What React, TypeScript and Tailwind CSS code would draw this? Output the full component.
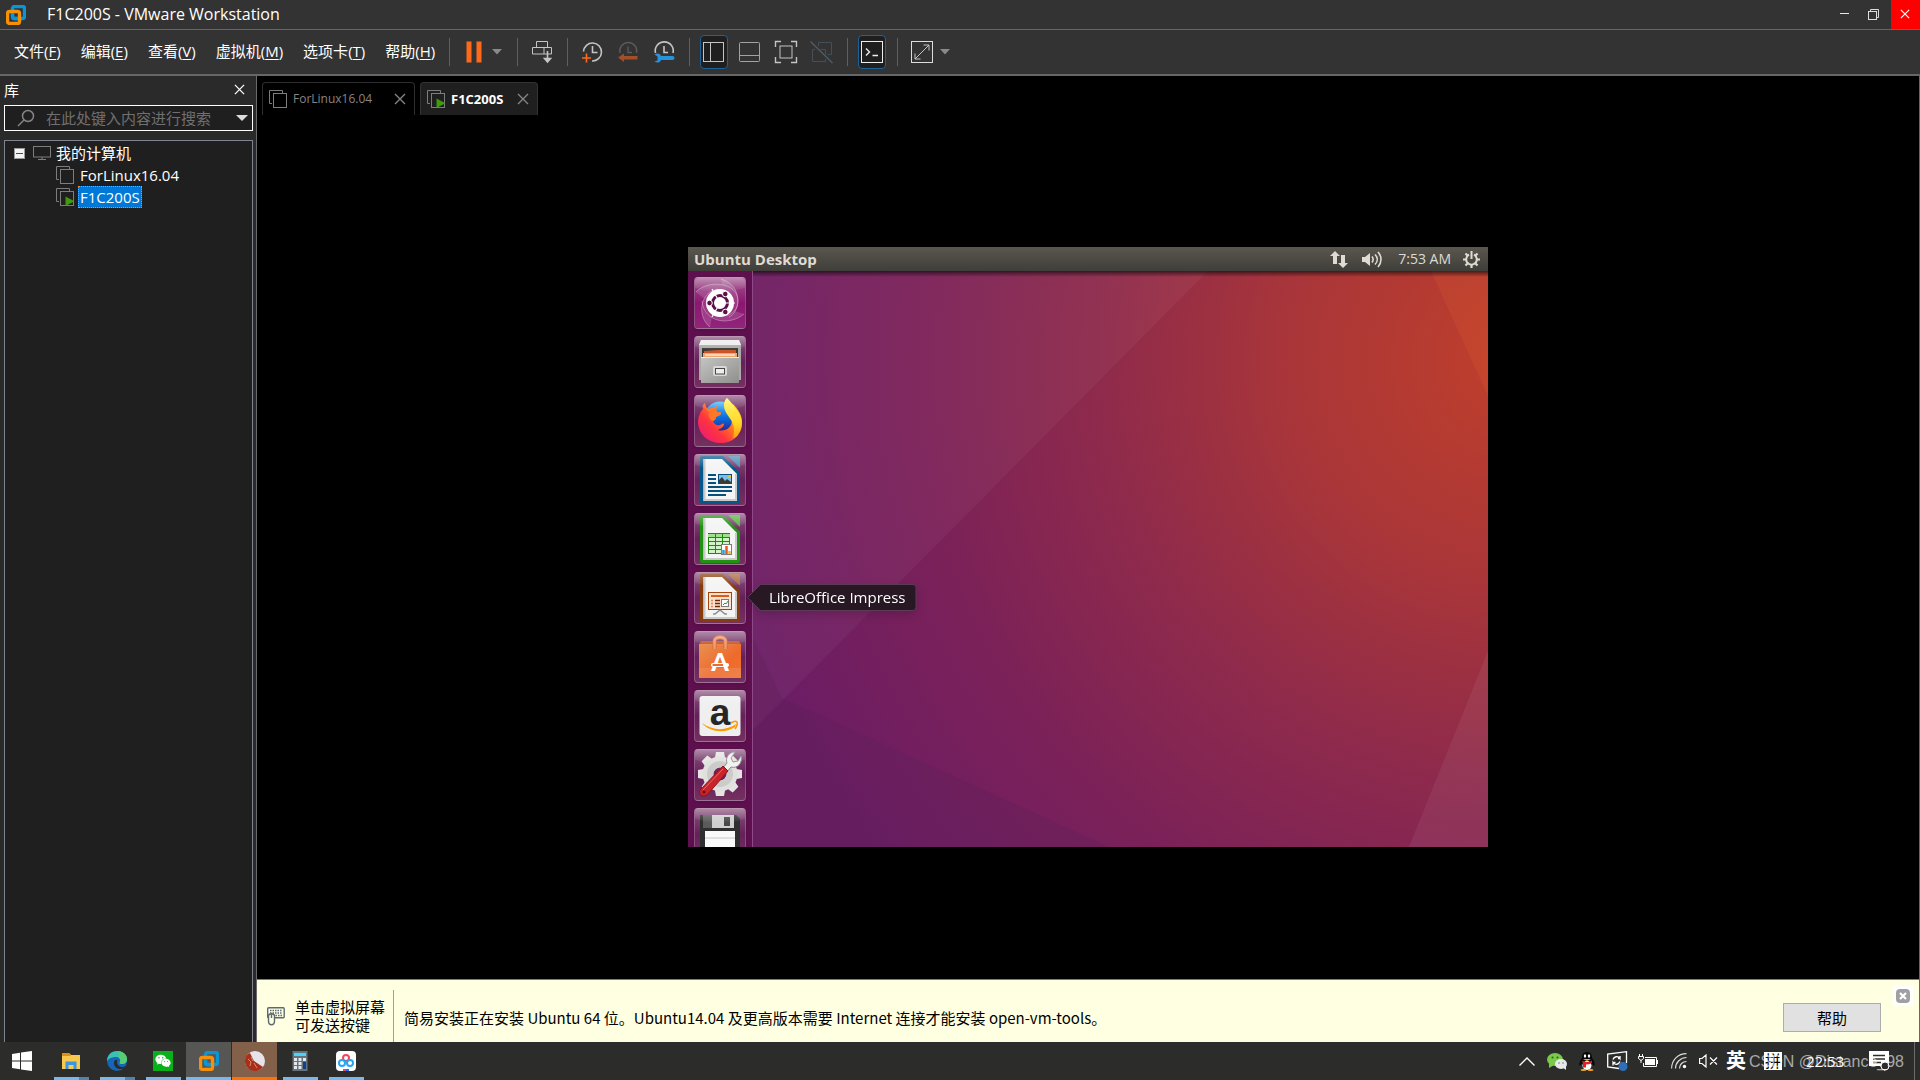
import React from 'react';
import { FaWeixin } from 'react-icons/fa';

const menus = [
  { label: '文件', key: 'F' },
  { label: '编辑', key: 'E' },
  { label: '查看', key: 'V' },
  { label: '虚拟机', key: 'M' },
  { label: '选项卡', key: 'T' },
  { label: '帮助', key: 'H' }
];

const VmwareLogo: React.FC = () => (
  <svg viewBox="0 0 20 20" className="w-5 h-5" fill="none" strokeWidth="3.400">
    <rect x="6.5" y="1.5" width="12" height="12" rx="2" stroke="#0c95d5" />
    <rect x="1.5" y="6.5" width="12" height="12" rx="2" stroke="#f69009" />
    <path d="M6.5 8.500v3a2 2 0 0 0 2 2H11" stroke="#0c95d5" />
  </svg>
);

const VmIcon: React.FC<{ running?: boolean }> = ({ running }) => (
  <svg viewBox="0 0 18 18" className="w-[18px] h-[18px] shrink-0" fill="none" stroke="#7d7d7d">
    <path d="M3 13.5H.5V.5h13V3" />
    <rect x="4.5" y="3.5" width="13" height="14" />
    {running && <path d="M9.500 8.500v9.500l9-4.700z" fill="#3f9a0c" stroke="none" />}
  </svg>
);

const CloseGlyph: React.FC<{ className: string }> = ({ className }) => (
  <svg viewBox="0 0 12 12" className={className} fill="none" stroke="currentColor" strokeWidth="1.4">
    <path d="M1 1l10 10M11 1L1 11" />
  </svg>
);

const Separator: React.FC = () => <div className="w-px h-7 ml-[11px] mr-2.5 shrink-0 bg-[#5f5f5f]"></div>;

const Caret: React.FC = () => (
  <button aria-label="More" className="w-[18px] h-[34px] flex items-center justify-center">
    <svg viewBox="0 0 10 6" className="w-2.5 h-1.5">
      <path d="M0 0h10L5 5.500z" fill="#8a8a8a" />
    </svg>
  </button>
);

interface ToolProps {
  label: string;
  active?: boolean;
  children: React.ReactNode;
}

const Tool: React.FC<ToolProps> = ({ label, active, children }) => (
  <button
    aria-label={label}
    className={
      active
        ? 'w-7 h-[34px] flex items-center justify-center rounded-sm border border-[#1d6299] bg-[#1f1f1f]'
        : 'w-7 h-[34px] flex items-center justify-center'
    }
  >
    <svg viewBox="0 0 24 24" className="w-6 h-6 shrink-0" fill="none" stroke="#c4c4c4">
      {children}
    </svg>
  </button>
);

const TitleBar: React.FC = () => (
  <header className="h-[30px] flex items-center bg-[#333333] border-b border-[#666666]">
    <div className="pl-1.5 w-[47px]">
      <VmwareLogo />
    </div>
    <h1 className="flex-1 pb-0.5 text-[16px] leading-5">F1C200S - VMware Workstation</h1>
    <button aria-label="Minimize" className="w-[29px] h-[29px] pb-0.5 flex items-center justify-center">
      <span className="w-[9px] h-px bg-gray-200"></span>
    </button>
    <button aria-label="Restore" className="w-[29px] h-[29px] mr-[3px] flex items-center justify-center">
      <svg viewBox="0 0 11 11" className="w-[11px] h-[11px]" fill="none" stroke="#dddddd">
        <path d="M2.500 2.500v-2h8v8h-2" />
        <rect x=".5" y="2.500" width="8" height="8" />
      </svg>
    </button>
    <button aria-label="Close" className="w-[29px] h-[29px] pr-0.5 pb-0.5 flex items-center justify-center bg-[#ff0000]">
      <CloseGlyph className="w-2.5 h-2.5" />
    </button>
  </header>
);

const ToolBar: React.FC = () => (
  <nav className="h-[46px] flex items-center bg-[#333333] border-b-2 border-[#666666]">
    <div className="flex gap-5 pl-3.5 pb-[3px] w-[438px] shrink-0 text-[15px] leading-5 whitespace-nowrap">
      {menus.map((menu) => (
        <button key={menu.key}>
          {menu.label}(<span className="underline underline-offset-2">{menu.key}</span>)
        </button>
      ))}
    </div>
    <Separator />
    <Tool label="Pause">
      <path d="M4.500 1.500h5v21h-5zM14.500 1.500h5v21h-5z" fill="#ff6a1a" stroke="none" />
    </Tool>
    <Caret />
    <Separator />
    <Tool label="Send Ctrl+Alt+Del">
      <path d="M6.500 7.500v-6h11v6M2.500 7.500h19v6.500h-19zM14 7.500V14" />
      <path d="M17.500 11v11M14.500 18.500l3 3.500 3-3.500z" fill="#c4c4c4" strokeWidth="1.600" />
    </Tool>
    <Separator />
    <div className="flex gap-2">
      <Tool label="Take snapshot">
        <path d="M3.500 11.500A9 9 0 1 1 12 21" strokeWidth="1.600" />
        <path d="M12.500 6v6.500h5" strokeWidth="1.600" />
        <path d="M6.500 13.500v9M2 18h9" stroke="#ff6a1a" strokeWidth="1.600" />
      </Tool>
      <Tool label="Revert snapshot">
        <path d="M4 13a8.500 8.500 0 1 1 16.500 0M12 6.500v6h4" stroke="#5a5a5a" strokeWidth="1.400" />
        <path d="M2 17.500l6-4v2.500h13.500v3.500H8V22z" fill="#a24e28" stroke="none" />
      </Tool>
      <Tool label="Manage snapshots">
        <path d="M3.500 13a9 9 0 1 1 17.500 0M12 6v6.500h4" strokeWidth="1.600" />
        <path
          d="M2.500 14.500c3-2 6-1 6.500 1.500h11.500a1.800 1.800 0 0 1 0 4H9c-.5 2.500-3.500 3.500-6.500 1.500l3-1v-4z"
          fill="#2793dc"
          stroke="none"
        />
      </Tool>
    </div>
    <Separator />
    <div className="flex gap-2">
      <Tool label="Library" active>
        <rect x="1.500" y="2.500" width="20" height="19" />
        <path d="M8.500 2.500v19" />
      </Tool>
      <Tool label="Thumbnail bar">
        <rect x="1.500" y="2.500" width="20" height="19" rx="1" stroke="#a2a2a2" />
        <path d="M1.500 15.500h20" stroke="#a2a2a2" />
      </Tool>
      <Tool label="Full screen">
        <path d="M1.500 7V1.500H7M17 1.500h5.500V7M22.500 17v5.500H17M7 22.500H1.500V17" strokeWidth="1.400" />
        <rect x="6" y="6" width="12" height="12" />
      </Tool>
      <Tool label="Unity">
        <path d="M8.500 6V2.500h13v12h-4M5 9.500H2.500v12h13V19M10.500 9.500h5v5" stroke="#435059" />
        <path d="M.5 1.500l22 21.500" stroke="#4e5c66" strokeWidth="1.400" />
      </Tool>
    </div>
    <Separator />
    <Tool label="Console" active>
      <rect x="1.500" y="1.500" width="21" height="21" stroke="#eeeeee" />
      <path d="M6 8.500l3.500 3.500L6 15.500M12.500 15.500H18" stroke="#eeeeee" strokeWidth="1.400" />
    </Tool>
    <Separator />
    <Tool label="Stretch">
      <rect x="1.500" y="1.500" width="21" height="21" stroke="#dddddd" />
      <path d="M5 19L19 5M13.500 5H19v5.500M5 13.500V19h5.500" />
    </Tool>
    <Caret />
  </nav>
);

const Library: React.FC = () => (
  <aside className="w-[257px] shrink-0 flex flex-col px-1 bg-[#2a2a2a] border-r border-[#6a6a6a]">
    <div className="h-[29px] flex items-center justify-between pr-[7px] pb-0.5 text-[15px] leading-5">
      <h2>库</h2>
      <button aria-label="Close library">
        <CloseGlyph className="w-[11px] h-[11px]" />
      </button>
    </div>
    <div className="h-[26px] w-[249px] flex items-center pl-3 pr-1 border border-white bg-[#1f1f1f]">
      <svg viewBox="0 0 18 18" className="w-[18px] h-[18px] shrink-0" fill="none" stroke="#858585" strokeWidth="1.500">
        <circle cx="11" cy="7" r="5.500" />
        <path d="M7 11l-6 6" />
      </svg>
      <input
        aria-label="搜索"
        placeholder="在此处键入内容进行搜索"
        className="w-[178px] ml-[11px] shrink-0 bg-transparent outline-none text-[15px] leading-5 placeholder:text-[#707070]"
      />
      <svg viewBox="0 0 12 6" className="w-3 h-1.5 ml-auto shrink-0">
        <path d="M0 0h12L6 6z" fill="#dddddd" />
      </svg>
    </div>
    <div className="mt-[9px] w-[249px] flex-1 pt-px border border-b-0 border-[#7d8590] bg-[#1f1f1f] text-[15px] leading-5">
      <div className="h-[22px] flex items-center pl-[9px]">
        <button aria-label="Collapse" className="w-[11px] h-[11px] flex items-center justify-center bg-gray-100 border border-[#9a9a9a]">
          <span className="w-[7px] h-px bg-[#3546a0]"></span>
        </button>
        <svg viewBox="0 0 18 14" className="w-[18px] h-3.5 ml-2 mr-[5px]" fill="none" stroke="#7d7d7d">
          <rect x=".5" y=".5" width="17" height="10.500" />
          <path d="M9 11v2.500M5 13.500h8" />
        </svg>
        <span>我的计算机</span>
      </div>
      <div className="h-[22px] flex items-center pl-[51px]">
        <VmIcon />
        <span className="ml-1.5">ForLinux16.04</span>
      </div>
      <div className="h-[22px] flex items-center pl-[51px]">
        <VmIcon running />
        <span className="ml-1 px-px bg-[#0078d7] border border-dotted border-[#ff8728]">F1C200S</span>
      </div>
    </div>
  </aside>
);

const Tabs: React.FC = () => (
  <div className="flex gap-[5px] pl-[5px] pt-1.5 h-[39px] leading-4">
    <div className="w-[153px] flex items-center pl-1.5 pr-2 rounded-t border border-b-0 border-[#2e2e2e] text-[#858585] text-[12px]">
      <VmIcon />
      <span className="ml-1.5 flex-1">ForLinux16.04</span>
      <button aria-label="Close ForLinux16.04">
        <CloseGlyph className="w-3 h-3" />
      </button>
    </div>
    <div className="w-[118px] flex items-center pl-1.5 pr-2 rounded-t border border-b-0 border-[#333333] bg-[#1f1f1f] text-[#858585] text-[13px]">
      <VmIcon running />
      <span className="ml-1.5 flex-1 font-bold text-white">F1C200S</span>
      <button aria-label="Close F1C200S">
        <CloseGlyph className="w-3 h-3" />
      </button>
    </div>
  </div>
);

const DashIcon: React.FC = () => (
  <>
    <rect width="52" height="52" rx="3" fill="url(#dash)" />
    <path d="M2 15C14 2 44 5 44 24c0 9-6 13-12 15M16 50C3 40 5 15 24 12M50 37c-14 12-40 9-42-13M27 2c22 6 20 33 8 38" fill="#ffffff" fillOpacity=".14" stroke="#ffffff" strokeOpacity=".3" />
    <circle cx="26" cy="26" r="14" fill="#ffffff" />
    <circle cx="26" cy="26" r="7.500" fill="none" stroke="#5c1248" strokeWidth="3" />
    <path d="M26 26L18 12M26 26h15M26 26l-8 14" stroke="#ffffff" strokeWidth="1.200" />
    <circle cx="26" cy="26" r="5" fill="#ffffff" />
    <circle cx="15.500" cy="26" r="2.800" fill="#5c1248" stroke="#ffffff" />
    <circle cx="31.300" cy="17" r="2.800" fill="#5c1248" stroke="#ffffff" />
    <circle cx="31.300" cy="35" r="2.800" fill="#5c1248" stroke="#ffffff" />
  </>
);

const FilesIcon: React.FC = () => (
  <>
    <path d="M7 4h38l2 5v35H5V9z" fill="#a9a9a7" />
    <path d="M7 4h38l2 5H5z" fill="#ececec" />
    <path d="M8 12h36v10H8z" fill="#3a3735" />
    <path d="M10 15l14-1h18v8H10z" fill="#c7562b" />
    <path d="M9 17h34v5H9z" fill="#f0a66a" />
    <path d="M11 19h30" stroke="#ffffff" />
    <path d="M7 21h38v26H7z" fill="url(#steel)" />
    <path d="M7 21.500h38" stroke="#eeeeee" />
    <rect x="19" y="30" width="14" height="10" rx="2" fill="#d8d8d6" />
    <rect x="21.500" y="32.500" width="9" height="5.500" fill="#eeeeee" stroke="#484848" />
  </>
);

const FirefoxIcon: React.FC = () => (
  <>
    <circle cx="26" cy="22" r="15.500" fill="url(#globe)" />
    <path
      d="M11 8c0 3 1 5 3 6 3-1 7-1 9-3-1 3-1 5 0 6 2 0 4 0 4 1 0 2-3 3-5 4 0 2-1 3-3 4 1 3 4 5 7 4 2-1 4-2 4-1 0 3-4 5-6 6 7 2 14-2 14-10 0-6-7-11-8-16 0-2 1-4 3-6 2 4 4 6 6 6 5 5 10 12 9 20-1 12-10 19-21 19C14 48 5 40 4 28c0-6 2-11 5-14-1-3 0-5 2-6z"
      fill="url(#fox)"
    />
    <path d="M33 3c5 5 7 8 10 12 6 8 6 18 2 23-1 3-4 5-6 5 2-7 1-13-2-18-3-5-7-9-7-14 0-4 1-6 3-8z" fill="url(#flame)" />
    <path d="M11 8c0 3 1 5 3 6 3-1 7-1 9-3-1 3-1 5 0 6 2 0 4 0 4 1 0 2-3 3-5 4 0 2-1 3-3 4-3-1-5-5-4-9-2-2-5-4-4-9z" fill="#ff7626" />
  </>
);

interface DocProps {
  color: string;
  corner: string;
  children: React.ReactNode;
}

const DocIcon: React.FC<DocProps> = ({ color, corner, children }) => (
  <>
    <path d="M8 2h21l17 17v29a2 2 0 0 1-2 2H8a2 2 0 0 1-2-2V4a2 2 0 0 1 2-2z" fill={color} />
    <path d="M34 2h12v12z" fill={corner} />
    <path d="M9.500 5H28l15 15v27H9.500z" fill="#f4f4f4" />
    <path d="M10.500 5v41h31.500V20" fill="none" stroke="#c9c9c9" strokeWidth="2" />
    {children}
  </>
);

const WriterIcon: React.FC = () => (
  <DocIcon color="#06578a" corner="#4b8cb4">
    <path d="M14 21h8M14 25h8M14 29h8M14 33h24M14 37h24M14 41h18" stroke="#06507f" strokeWidth="2" />
    <rect x="24.500" y="20.500" width="13" height="9" fill="#7cc0ee" stroke="#06507f" />
    <path d="M25 29v-3l3-3 3 4 2-2 4 3v1z" fill="#3b3b36" />
    <circle cx="35.500" cy="22.500" r="1.500" fill="#e9c13c" />
  </DocIcon>
);

const CalcIcon: React.FC = () => (
  <DocIcon color="#209312" corner="#55b33c">
    <rect x="14.500" y="20.500" width="21" height="20" fill="#d2f3c8" stroke="#1b8a0d" />
    <path d="M14 22.500h22" stroke="#9fe08c" strokeWidth="3" />
    <path d="M14 24.500h22M14 28.500h22M14 32.500h22M14 36.500h22M21.500 20v21M28.500 20v21" stroke="#1b8a0d" />
    <rect x="27.500" y="31.500" width="10" height="10" fill="#ffffff" stroke="#7c7c7c" />
    <path d="M29.500 41v-4" stroke="#2a9ddb" strokeWidth="2.500" />
    <path d="M32.500 41v-8" stroke="#e2591b" strokeWidth="2.500" />
    <path d="M35.500 41v-3" stroke="#eeb820" strokeWidth="2.500" />
  </DocIcon>
);

const ImpressIcon: React.FC = () => (
  <DocIcon color="#873c0c" corner="#a9663a">
    <rect x="14.500" y="20.500" width="23" height="17" fill="#fbe1cf" stroke="#a5440b" />
    <path d="M17 24h18" stroke="#d85f1d" strokeWidth="2" />
    <path d="M17 28.500h2M17 31.500h2M17 34.500h2" stroke="#e88455" strokeWidth="1.500" />
    <path d="M21 28.500h5M21 31.500h5M21 34.500h5" stroke="#6f2b07" strokeWidth="1.500" />
    <rect x="27.500" y="27.500" width="7" height="7" fill="#ffffff" stroke="#7c7c7c" />
    <path d="M29 33l2-2 1 1 2-3" stroke="#25a12d" fill="none" />
    <path d="M26 38l-5 4h-2M26 38l5 4h2" stroke="#8c8c8c" strokeWidth="1.500" fill="none" />
  </DocIcon>
);

const SoftwareIcon: React.FC = () => (
  <>
    <path d="M7 10h38l2 4H5z" fill="#c9592f" />
    <path d="M5 13h42v34H5z" fill="url(#bag)" />
    <path d="M5 37h42v10H5z" fill="#ffffff" fillOpacity=".1" />
    <path d="M20.500 18v-8c0-5 11-5 11 0v8" fill="none" stroke="#d9693c" strokeWidth="4" />
    <path d="M20.500 18v-8c0-5 11-5 11 0v8" fill="none" stroke="#f19a6c" strokeWidth="2.400" />
    <text x="26" y="40" textAnchor="middle" fontFamily="Lato" fontWeight="900" fontSize="25" fill="#ffffff">A</text>
    <rect x="17" y="32" width="18" height="4" rx="2" fill="#ffffff" />
    <path d="M18.500 34H29" stroke="#ee6a2c" strokeWidth="1.800" />
  </>
);

const AmazonIcon: React.FC = () => (
  <>
    <rect x="5.500" y="6" width="41" height="40" rx="3" fill="#efefef" />
    <text x="26" y="35" textAnchor="middle" fontFamily="Liberation Sans" fontWeight="700" fontSize="37" fill="#262626">a</text>
    <path d="M8 33c11 8 24 8 34 1l-1 3c-10 7-26 5-33-4z" fill="#ff9900" />
    <path d="M37 33c3-2 5-2 6-1 1 2 0 4-2 7" fill="none" stroke="#ff9900" strokeWidth="1.600" />
  </>
);

const SettingsIcon: React.FC = () => (
  <>
    {[0, 45, 90, 135, 180, 225, 270, 315].map((angle) => (
      <path key={angle} d="M20.500 11l1.500-8h8l1.500 8z" fill="#e4e4e2" transform={`rotate(${angle} 26 25)`} />
    ))}
    <circle cx="26" cy="25" r="12" fill="none" stroke="#e0e0de" strokeWidth="11" />
    <circle cx="26" cy="25" r="10" fill="none" stroke="#cbcbc9" strokeWidth="6" />
    <path d="M28 20l5-6c-2-5 2-11 8-11l-4 6 2 4 5-1 3-5c2 7-4 13-10 11l-6 7z" fill="#f2f2f0" stroke="#8b8b8b" />
    <path d="M29 17l5 5-21 24c-4 3-9-1-7-5z" fill="#c8242b" stroke="#911218" />
    <path d="M29 20L9 41" stroke="#e7696b" />
    <circle cx="10" cy="43" r="1.500" fill="#6e0e13" />
  </>
);

const FloppyIcon: React.FC = () => (
  <>
    <path d="M6 7h36l4 4v41H6z" fill="#2f2f2f" />
    <path d="M9 7h9v13H9z" fill="#5b5b5b" />
    <rect x="18" y="7" width="22" height="13" fill="#cfcfcf" />
    <rect x="30" y="9" width="6" height="9" fill="#474747" />
    <path d="M11 23h30v29H11z" fill="#f9f9f9" />
    <path d="M11 30h30" stroke="#c8c8c0" />
  </>
);

const launcher = [
  { name: 'Dash', icon: <DashIcon /> },
  { name: 'Files', icon: <FilesIcon /> },
  { name: 'Firefox', icon: <FirefoxIcon /> },
  { name: 'LibreOffice Writer', icon: <WriterIcon /> },
  { name: 'LibreOffice Calc', icon: <CalcIcon /> },
  { name: 'LibreOffice Impress', icon: <ImpressIcon /> },
  { name: 'Ubuntu Software', icon: <SoftwareIcon /> },
  { name: 'Amazon', icon: <AmazonIcon /> },
  { name: 'System Settings', icon: <SettingsIcon /> },
  { name: 'Floppy Disk', icon: <FloppyIcon /> }
];

const Gradients: React.FC = () => (
  <svg className="absolute w-0 h-0" aria-hidden="true">
    <defs>
      <linearGradient id="dash" x1="0" y1="0" x2="0" y2="1">
        <stop offset="0" stopColor="#a0588f" />
        <stop offset=".5" stopColor="#8d1670" />
        <stop offset="1" stopColor="#92257c" />
      </linearGradient>
      <linearGradient id="steel" x1="0" y1="0" x2="1" y2="1">
        <stop offset="0" stopColor="#c4c4c2" />
        <stop offset="1" stopColor="#8f8f8d" />
      </linearGradient>
      <linearGradient id="globe" x1="0" y1="0" x2="0" y2="1">
        <stop offset="0" stopColor="#5cc0fb" />
        <stop offset=".5" stopColor="#0a71e0" />
        <stop offset="1" stopColor="#2b1b8c" />
      </linearGradient>
      <linearGradient id="fox" x1="0" y1="1" x2="1" y2="0">
        <stop offset="0" stopColor="#e5137e" />
        <stop offset=".35" stopColor="#ff3440" />
        <stop offset=".65" stopColor="#ff9a12" />
        <stop offset="1" stopColor="#ffd428" />
      </linearGradient>
      <linearGradient id="flame" x1="0" y1="0" x2="0" y2="1">
        <stop offset="0" stopColor="#fff56a" />
        <stop offset=".6" stopColor="#ffd928" />
        <stop offset="1" stopColor="#ff9c10" />
      </linearGradient>
      <linearGradient id="bag" x1="0" y1="0" x2="1" y2="1">
        <stop offset="0" stopColor="#e79152" />
        <stop offset=".6" stopColor="#ee6a2c" />
        <stop offset="1" stopColor="#ee7434" />
      </linearGradient>
      <linearGradient id="sheen" x1="0" y1="0" x2="0" y2="1">
        <stop offset="0" stopColor="#ffffff" stopOpacity=".35" />
        <stop offset="1" stopColor="#ffffff" stopOpacity="0" />
      </linearGradient>
    </defs>
  </svg>
);

const Wallpaper: React.FC = () => (
  <svg viewBox="0 0 735 576" className="w-full h-full" preserveAspectRatio="none">
    <defs>
      <radialGradient id="sky" gradientUnits="userSpaceOnUse" cx="760" cy="90" r="800">
        <stop offset="0" stopColor="#bf3f2b" />
        <stop offset=".25" stopColor="#ac3737" />
        <stop offset=".5" stopColor="#902b4a" />
        <stop offset=".75" stopColor="#7b2159" />
        <stop offset="1" stopColor="#6c1d64" />
      </radialGradient>
      <linearGradient id="shade" x1="0" y1="0" x2="0" y2="1">
        <stop offset="0" stopColor="#000000" stopOpacity=".6" />
        <stop offset="1" stopColor="#000000" stopOpacity="0" />
      </linearGradient>
    </defs>
    <rect width="735" height="576" fill="url(#sky)" />
    <path d="M0 0h455L0 459z" fill="#ffffff" fillOpacity=".04" />
    <path d="M0 368l29 59L0 459z" fill="#4a1c40" fillOpacity=".15" />
    <path d="M0 459l29-32 327 149H0z" fill="#4a2050" fillOpacity=".16" />
    <path d="M678 0h57v125z" fill="#ff7a30" fillOpacity=".12" />
    <path d="M735 380v196h-79z" fill="#ffffff" fillOpacity=".06" />
    <rect width="735" height="6" fill="url(#shade)" />
  </svg>
);

const UbuntuDesktop: React.FC = () => (
  <section className="w-[800px] h-[600px] flex flex-col overflow-hidden font-['Open_Sans','Noto_Sans',sans-serif]">
    <div className="h-6 shrink-0 flex items-center pl-1.5 pr-2 bg-linear-to-b from-[#5a574e] to-[#3f3e39] text-[#dfdbd2] text-[14px] leading-5">
      <span className="flex-1 pb-px font-bold text-[15px]">Ubuntu Desktop</span>
      <svg viewBox="0 0 18 17" className="w-[18px] h-[17px] mr-3.5" fill="currentColor">
        <path d="M5 0l5 5H7v8H3V5H0zM13 17l5-5h-3V4h-4v8H8z" />
      </svg>
      <svg viewBox="0 0 20 17" className="w-5 h-[17px] mr-4" fill="none" stroke="currentColor" strokeWidth="1.600">
        <path d="M0 6h3l5-4v13l-5-4H0z" fill="currentColor" stroke="none" />
        <path d="M10 5.500c1.500 2 1.500 4 0 6M13 3.500c3 3 3 7 0 10M16 1c4 4.500 4 10.500 0 15" />
      </svg>
      <span className="mr-3">7:53 AM</span>
      <svg viewBox="0 0 17 17" className="w-[17px] h-[17px]" fill="none" stroke="currentColor">
        <path d="M6 3.700a5.300 5.300 0 1 0 5 0M8.500 0v8" strokeWidth="2" />
        <path d="M0 8.500h3M14 8.500h3M8.500 14v3M2.500 2.500l2 2M14.500 2.500l-2 2M2.500 14.500l2-2M14.500 14.500l-2-2" strokeWidth="2.200" />
      </svg>
    </div>
    <div className="flex-1 min-h-0 flex">
      <div className="w-[65px] shrink-0 flex flex-col gap-[7px] px-1.5 pt-1.5 bg-[#5e0f4e] border-r border-[#8d4a86]">
        {launcher.map((app) => (
          <div key={app.name} className="relative shrink-0 h-[52px]">
            <button
              aria-label={app.name}
              className="w-[52px] h-[52px] rounded border border-white/20 border-t-white/50 bg-linear-to-b from-[#86507c] via-[#65205a] to-[#74305f] overflow-hidden shadow"
            >
              <svg viewBox="1 1 50 50" className="w-[50px] h-[50px]">
                {app.icon}
                <path d="M0 0h52v10C38 17 14 17 0 10z" fill="url(#sheen)" />
              </svg>
            </button>
            {app.name === 'LibreOffice Impress' && (
              <div role="tooltip" className="absolute left-[53px] top-3 z-10 w-[170px] h-[27px] drop-shadow-lg">
                <svg viewBox="0 0 170 27" className="absolute inset-0 w-[170px] h-[27px]">
                  <path d="M.5 13.500L13.500.5H166a3 3 0 0 1 3 3v20a3 3 0 0 1-3 3H13.500z" fill="#271823" stroke="#5c3b56" />
                </svg>
                <span className="relative block pl-[22px] text-white text-[15px] leading-[26px] whitespace-nowrap">
                  {app.name}
                </span>
              </div>
            )}
          </div>
        ))}
      </div>
      <div className="flex-1 min-w-0">
        <Wallpaper />
      </div>
    </div>
  </section>
);

const Notice: React.FC = () => (
  <section className="h-[63px] shrink-0 flex border-t border-[#7d7d70] bg-[#ffffe1] text-black text-[15px] leading-[18px] font-['Noto_Sans_CJK_SC',sans-serif]">
    <div className="flex items-center gap-2.5 mt-2.5 pl-2.5 pr-2 border-r border-[#a0a0a0]">
      <svg viewBox="0 0 18 20" className="w-[18px] h-5" fill="none" stroke="#5c6b70" strokeWidth="1.400">
        <rect x=".7" y="1.700" width="16.500" height="10" rx="1" />
        <path d="M3 4.500h12M3 7h12M6 9.500h9" strokeDasharray="1.500 1" />
        <path d="M1.500 10c0-3 6-3 6 0v5c0 5-6 5-6 0zM4.500 8v4" fill="#ffffe1" />
      </svg>
      <p>
        单击虚拟屏幕
        <br />
        可发送按键
      </p>
    </div>
    <p className="flex-1 mt-[29px] pl-2.5">
      简易安装正在安装 Ubuntu 64 位。Ubuntu14.04 及更高版本需要 Internet 连接才能安装 open-vm-tools。
    </p>
    <button className="w-[98px] h-[29px] mt-[23px] mr-3 bg-[#e1e1e1] border border-[#adadad]">帮助</button>
    <button aria-label="Dismiss" className="w-5 h-5 mt-1.5 mr-1.5 flex items-center justify-center bg-white">
      <span className="w-3.5 h-3.5 flex items-center justify-center rounded-sm bg-[#a0a0a0] text-white">
        <svg viewBox="0 0 8 8" className="w-2 h-2" stroke="currentColor" strokeWidth="2.200">
          <path d="M1 1l6 6M7 1L1 7" />
        </svg>
      </span>
    </button>
  </section>
);

const WindowsIcon: React.FC = () => (
  <svg viewBox="0 0 20 20" className="w-5 h-5" fill="#ffffff">
    <path d="M0 3l8-1.200V9.500H0zM9 1.600L20 0v9.500H9zM0 10.500h8v7.700L0 17zM9 10.500h11V20L9 18.400z" />
  </svg>
);

const taskItems = [
  {
    name: 'File Explorer',
    stacked: true,
    icon: (
      <>
        <path d="M1 2h7l2 2h9v14H1z" fill="#f9c94e" />
        <path d="M1 2h7l2 2-1 1H1z" fill="#d99411" />
        <path d="M4.500 18v-7.500h11V18h-3v-4h-5v4z" fill="#3c95e0" />
      </>
    )
  },
  {
    name: 'Edge',
    stacked: true,
    icon: (
      <>
        <circle cx="10" cy="10" r="10" fill="#1467b8" />
        <path d="M0 10C0 4 4.500 0 10 0s10 3.500 10 8c0 3-2 5-5 5-2 0-3-1-2-2 1-3-1-5-4-5-4 0-7 1-9 4z" fill="#39c2b4" />
        <path d="M10 0c6 0 10 4 10 8s-3 5-5 5-3-1-2-2c1-2 0-4-2-5 3-2 1-5-1-6z" fill="#58cc72" />
        <path d="M8 9c-3 4 1 10 6 9 2 0 4-1 5-3-3 2-9 1-9-4 0-1 0-2 1-2z" fill="#2b2b2b" />
      </>
    )
  },
  {
    name: 'WeChat',
    stacked: false,
    icon: (
      <>
        <rect width="20" height="20" fill="#09b01a" />
        <FaWeixin x="2" y="2" size={16} color="#ffffff" />
      </>
    )
  }
];

const TaskBar: React.FC = () => (
  <footer className="relative h-[38px] shrink-0 flex items-center bg-[#2c2c2b]">
    <button aria-label="Start" className="w-12 pl-3">
      <WindowsIcon />
    </button>
    {taskItems.map((item) => (
      <button key={item.name} aria-label={item.name} className="w-[46px] h-full flex flex-col items-center justify-between pt-[9px]">
        <svg viewBox="0 0 20 20" className="w-5 h-5">{item.icon}</svg>
        <span className="w-[35px] h-[3px] flex bg-[#76b9ed]">
          {item.stacked && <span className="ml-auto w-2.5 bg-[#5283a9]"></span>}
        </span>
      </button>
    ))}
    <button aria-label="VMware Workstation" className="w-[45px] h-full flex flex-col items-center justify-between pt-[9px] bg-[#565655]">
      <VmwareLogo />
      <span className="w-full h-[3px] bg-[#76b9ed]"></span>
    </button>
    <button aria-label="Media player" className="w-[45px] h-full flex flex-col items-center justify-between pt-[9px] ml-px bg-[#83604a]">
      <svg viewBox="0 0 20 20" className="w-5 h-5">
        <circle cx="10" cy="10" r="10" fill="#e4e4ea" />
        <path d="M5 2L9 10l9 6A10 10 0 0 1 0 9c0-3 2-6 5-7z" fill="#a7301c" />
        <path d="M3 8l3 3-1 4M9 12l3 5M6 6l2 4" stroke="#d98a6c" fill="none" />
      </svg>
      <span className="w-full h-[3px] bg-[#ff7200]"></span>
    </button>
    <button aria-label="Calculator" className="w-[46px] h-full flex flex-col items-center justify-between pt-[9px]">
      <svg viewBox="0 0 20 20" className="w-5 h-5">
        <rect x="2.500" width="15" height="20" fill="#66727c" />
        <rect x="4" y="2" width="12" height="3" fill="#46d5fa" />
        <path d="M4 7h3v3H4zM8.500 7h3v3h-3zM13 7h3v3h-3zM4 11h3v3H4zM8.500 11h3v3h-3zM4 15h3v3H4zM8.500 15h3v3h-3z" fill="#e4e8ea" />
        <path d="M13 11h3v7h-3z" fill="#0c438c" />
      </svg>
      <span className="w-[35px] h-[3px] bg-[#76b9ed]"></span>
    </button>
    <button aria-label="Baidu Netdisk" className="w-[46px] h-full flex flex-col items-center justify-between pt-[9px]">
      <svg viewBox="0 0 20 20" className="w-5 h-5" fill="none" strokeWidth="2">
        <rect width="20" height="20" rx="4" fill="#ffffff" />
        <circle cx="10" cy="7" r="3" stroke="#f2455e" />
        <circle cx="6" cy="12" r="3" stroke="#22a7f5" />
        <circle cx="14" cy="12" r="3" stroke="#22a7f5" />
        <path d="M7 19h3" stroke="#f2455e" />
        <path d="M10 19h3" stroke="#2a6bf2" />
      </svg>
      <span className="w-[35px] h-[3px] bg-[#76b9ed]"></span>
    </button>
    <div className="ml-auto flex items-center">
      <svg viewBox="0 0 16 9" className="w-4 h-[9px] mr-3" fill="none" stroke="#ffffff" strokeWidth="1.400">
        <path d="M.5 8.500L8 1l7.500 7.500" />
      </svg>
      <svg viewBox="0 0 20 17" className="w-5 h-[17px] mr-3">
        <ellipse cx="8" cy="6.500" rx="8" ry="6.500" fill="#7bc94a" />
        <path d="M2 10l0 5 5-3z" fill="#7bc94a" />
        <circle cx="5.500" cy="4.500" r="1" fill="#2c5c12" />
        <circle cx="10.500" cy="4.500" r="1" fill="#2c5c12" />
        <ellipse cx="14" cy="11" rx="6" ry="5" fill="#e6e9ea" />
        <path d="M15 14l4 3v-4z" fill="#e6e9ea" />
        <circle cx="12" cy="10" r=".8" fill="#777777" />
        <circle cx="16" cy="10" r=".8" fill="#777777" />
      </svg>
      <svg viewBox="0 0 16 19" className="w-4 h-[19px] mr-3">
        <path d="M8 0c4 0 5 3 5 6 2 2 3 5 2.500 8L13 12l-5 5-5-5-2.500 2C0 11 1 8 3 6c0-3 1-6 5-6z" fill="#080808" />
        <ellipse cx="8" cy="13.500" rx="4.500" ry="4.500" fill="#ffffff" />
        <ellipse cx="6" cy="4" rx="1.200" ry="1.700" fill="#ffffff" />
        <ellipse cx="10" cy="4" rx="1.200" ry="1.700" fill="#ffffff" />
        <path d="M4 7h8l-4 2z" fill="#f7a81b" />
        <path d="M3 8.500c3 2 7 2 10 0v2.500c-2 1-4 1.500-6 1.500v3H4v-4z" fill="#e0202c" />
        <ellipse cx="4.500" cy="18" rx="3" ry="1" fill="#f7a81b" />
        <ellipse cx="11.500" cy="18" rx="3" ry="1" fill="#f7a81b" />
      </svg>
      <svg viewBox="0 0 21 20" className="w-[21px] h-5 mr-2.5" fill="none" stroke="#ffffff" strokeWidth="1.300">
        <path d="M12 17.500L.7 16V3L19.500.7V12" />
        <path d="M6 8.500c1-3 5-4 7-1V5M13.500 7.500H11M13 10.500c-1 3-5 4-7 1v3M5.500 11.500h3" />
        <circle cx="16" cy="15.500" r="4.500" fill="#2f6fb7" stroke="none" />
      </svg>
      <svg viewBox="0 0 20 14" className="w-5 h-3.5 mr-[13px]" fill="none" stroke="#ffffff">
        <path d="M7 3.500h11.500v9h-13V9" />
        <rect x="7" y="5" width="10" height="6" fill="#ffffff" stroke="none" />
        <path d="M19.500 6v4M1.500 0v2M4.500 0v2M.5 2.500h5v2l-2.500 2-2.500-2zM3 6v3" />
      </svg>
      <svg viewBox="0 0 16 16" className="w-4 h-4 mr-3" fill="none" stroke="#dddddd" strokeWidth="1.200">
        <path d="M.6 15.500C.6 7 7 .6 15.500.6M4.500 15.500c0-6 5-11 11-11M8.500 15.500c0-4 3-7 7-7" />
        <circle cx="13.500" cy="13.500" r="1.700" fill="#ffffff" stroke="none" />
      </svg>
      <svg viewBox="0 0 19 14" className="w-[19px] h-3.5 mr-2" fill="none" stroke="#ffffff" strokeWidth="1.200">
        <path d="M.6 4.500H3l4-3.500v12L3 9.500H.6zM11 3.500l7 7M18 3.500l-7 7" />
      </svg>
      <span className="w-5 mr-[18px] text-[20px] leading-6 font-bold">英</span>
      <span className="w-[18px] h-[18px] mr-6 bg-white text-black text-[16px] leading-[18px] text-center">拼</span>
      <time className="w-[38px] mr-[25px] text-[15px] leading-5">22:53</time>
      <svg viewBox="0 0 21 20" className="w-[21px] h-5 mr-6">
        <path d="M0 0h20v15h-4v5l-5-5H0z" fill="#ffffff" />
        <path d="M4 4.500h12M4 8h12M4 11.500h8" stroke="#2c2c2b" strokeWidth="1.300" />
        <circle cx="16" cy="15" r="4" fill="#2c2c2b" stroke="#ffffff" />
      </svg>
      <span className="w-px h-[38px] mr-[5px] bg-[#6b6b6b]"></span>
    </div>
    <span className="absolute right-4 top-2 text-[16px] leading-6 text-white/60 font-['Liberation_Sans',sans-serif]">
      CSDN @Distance_98
    </span>
  </footer>
);

const App: React.FC = () => {
  return (
    <div className="h-screen flex flex-col overflow-hidden bg-black text-white font-['Open_Sans','Noto_Sans_CJK_SC',sans-serif]">
      <Gradients />
      <TitleBar />
      <ToolBar />
      <div className="flex-1 min-h-0 flex">
        <Library />
        <main className="flex-1 min-w-0 flex flex-col border-r border-[#666666]">
          <Tabs />
          <div className="flex-1 min-h-0 flex items-center justify-center">
            <UbuntuDesktop />
          </div>
          <Notice />
        </main>
      </div>
      <TaskBar />
    </div>
  );
};

export default App;
